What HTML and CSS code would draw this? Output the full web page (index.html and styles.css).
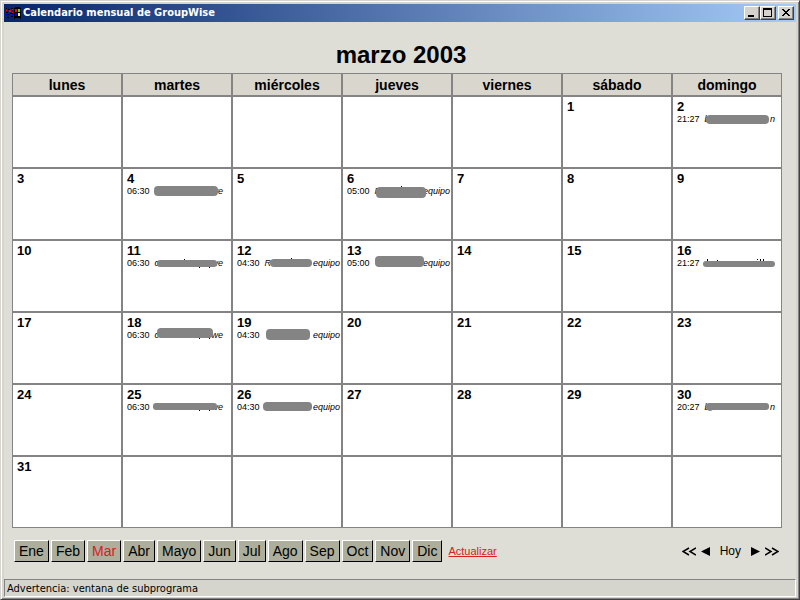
FILE: index.html
```html
<!DOCTYPE html>
<html lang="es">
<head>
<meta charset="utf-8">
<title>Calendario mensual de GroupWise</title>
<link rel="stylesheet" href="styles.css">
</head>
<body>
<div class="window">
  <header class="titlebar">
    <svg class="logo" width="16" height="16" viewBox="0 0 16 16" shape-rendering="crispEdges" aria-hidden="true">
      <path fill="#000" d="M8 3h1V2h5v1h1v11h-1v-1H9v1H8zM0 3h1v1H0zM2 4h2v1H2zM5 3h2v1H5zM0 7h2v1H0zM4 8h3v1H4zM1 9h2v1H1zM5 11h2v1H5zM1 12h2v1H1z"/>
      <path fill="#f00" d="M9 4h2v3H9zM0 5h1v1H0zM3 5h2v2H3zM6 4h1v1H6zM6 7h1v1H6z"/>
      <path fill="#0f0" d="M12 4h2v3h-2z"/>
      <path fill="#00f" d="M9 8h2v3H9zM0 9h1v2H0zM3 10h2v1H3zM6 9h1v2H6z"/>
      <path fill="#ff0" d="M12 8h2v3h-2z"/>
    </svg>
    <h1 class="caption">Calendario mensual de GroupWise</h1>
    <div class="controls">
      <button type="button" class="control" aria-label="Minimizar"><svg width="14" height="12" viewBox="0 0 14 12" shape-rendering="crispEdges"><path d="M3 8h6v2H3z"/></svg></button>
      <button type="button" class="control" aria-label="Maximizar"><svg width="14" height="12" viewBox="0 0 14 12" shape-rendering="crispEdges"><path fill-rule="evenodd" d="M2 1h9v9H2zM3 3v6h7V3z"/></svg></button>
      <button type="button" class="control close" aria-label="Cerrar"><svg width="14" height="12" viewBox="0 0 14 12" shape-rendering="crispEdges"><path d="M3 2h2v1H3zM9 2h2v1H9zM4 3h2v1H4zM8 3h2v1H8zM5 4h4v1H5zM6 5h2v1H6zM5 6h4v1H5zM4 7h2v1H4zM8 7h2v1H8zM3 8h2v1H3zM9 8h2v1H9z"/></svg></button>
    </div>
  </header>
  <main class="content">
    <h2 class="month">marzo 2003</h2>
    <table class="calendar">
      <thead>
        <tr><th scope="col">lunes</th><th scope="col">martes</th><th scope="col">miércoles</th><th scope="col">jueves</th><th scope="col">viernes</th><th scope="col">sábado</th><th scope="col">domingo</th></tr>
      </thead>
      <tbody>
        <tr>
          <td></td><td></td><td></td><td></td><td></td>
          <td><b class="day">1</b></td>
          <td><b class="day">2</b><p class="event"><time>21:27</time><i class="name person"><span>b</span><span>n</span></i></p>
            <svg class="mask" width="108" height="70" viewBox="0 0 108 70"><rect x="33" y="18" width="63" height="9" rx="4"/></svg></td>
        </tr>
        <tr>
          <td><b class="day">3</b></td>
          <td><b class="day">4</b><p class="event"><time>06:30</time><i class="name group"><span></span><span>we</span></i></p>
            <svg class="mask" width="108" height="70" viewBox="0 0 108 70"><rect x="31" y="17" width="64" height="10" rx="4"/></svg></td>
          <td><b class="day">5</b></td>
          <td><b class="day">6</b><p class="event"><time>05:00</time><i class="name"><span>R</span><span>equipo</span></i></p>
            <svg class="mask" width="108" height="70" viewBox="0 0 108 70"><path class="ink" d="M58 17h1v1h-1z"/><rect x="33" y="18" width="50" height="11" rx="4"/></svg></td>
          <td><b class="day">7</b></td>
          <td><b class="day">8</b></td>
          <td><b class="day">9</b></td>
        </tr>
        <tr>
          <td><b class="day">10</b></td>
          <td><b class="day">11</b><p class="event"><time>06:30</time><i class="name group"><span>c</span><span>we</span></i></p>
            <svg class="mask" width="108" height="70" viewBox="0 0 108 70"><path class="ink" d="M61 18h1v1h-1zM76 26h1v1h-1zM86 26h1v1h-1z"/><rect x="34" y="19" width="60" height="7" rx="3"/></svg></td>
          <td><b class="day">12</b><p class="event"><time>04:30</time><i class="name"><span>R</span><span>equipo</span></i></p>
            <svg class="mask" width="108" height="70" viewBox="0 0 108 70"><path class="ink" d="M58 17h1v1h-1z"/><rect x="37" y="18" width="42" height="8" rx="4"/></svg></td>
          <td><b class="day">13</b><p class="event"><time>05:00</time><i class="name"><span></span><span>equipo</span></i></p>
            <svg class="mask" width="108" height="70" viewBox="0 0 108 70"><rect x="32" y="15" width="49" height="11" rx="4"/></svg></td>
          <td><b class="day">14</b></td>
          <td><b class="day">15</b></td>
          <td><b class="day">16</b><p class="event"><time>21:27</time></p>
            <svg class="mask" width="108" height="70" viewBox="0 0 108 70"><path class="ink" d="M34 18h1v2h-1zM44 19h1v1h-1zM84 18h1v1h-1zM87 18h1v2h-1zM90 18h1v2h-1z"/><rect x="30" y="20" width="72" height="6" rx="3"/></svg></td>
        </tr>
        <tr>
          <td><b class="day">17</b></td>
          <td><b class="day">18</b><p class="event"><time>06:30</time><i class="name group"><span>c</span><span>we</span></i></p>
            <svg class="mask" width="108" height="70" viewBox="0 0 108 70"><path class="ink" d="M76 24h1v2h-1zM86 24h1v2h-1z"/><rect x="34" y="15" width="56" height="10" rx="4"/></svg></td>
          <td><b class="day">19</b><p class="event"><time>04:30</time><i class="name"><span></span><span>equipo</span></i></p>
            <svg class="mask" width="108" height="70" viewBox="0 0 108 70"><rect x="33" y="16" width="44" height="11" rx="4"/></svg></td>
          <td><b class="day">20</b></td>
          <td><b class="day">21</b></td>
          <td><b class="day">22</b></td>
          <td><b class="day">23</b></td>
        </tr>
        <tr>
          <td><b class="day">24</b></td>
          <td><b class="day">25</b><p class="event"><time>06:30</time><i class="name group"><span></span><span>we</span></i></p>
            <svg class="mask" width="108" height="70" viewBox="0 0 108 70"><path class="ink" d="M76 25h1v1h-1zM86 25h1v1h-1z"/><rect x="30" y="18" width="64" height="7" rx="3"/></svg></td>
          <td><b class="day">26</b><p class="event"><time>04:30</time><i class="name"><span></span><span>equipo</span></i></p>
            <svg class="mask" width="108" height="70" viewBox="0 0 108 70"><rect x="30" y="17" width="49" height="9" rx="4"/></svg></td>
          <td><b class="day">27</b></td>
          <td><b class="day">28</b></td>
          <td><b class="day">29</b></td>
          <td><b class="day">30</b><p class="event"><time>20:27</time><i class="name person"><span>b</span><span>n</span></i></p>
            <svg class="mask" width="108" height="70" viewBox="0 0 108 70"><rect x="33" y="18" width="63" height="7" rx="3"/><circle cx="37" cy="23" r="3"/></svg></td>
        </tr>
        <tr>
          <td><b class="day">31</b></td><td></td><td></td><td></td><td></td><td></td><td></td>
        </tr>
      </tbody>
    </table>
    <nav class="toolbar">
      <div class="months">
        <button type="button">Ene</button><button type="button">Feb</button><button type="button" class="current">Mar</button><button type="button">Abr</button><button type="button">Mayo</button><button type="button">Jun</button><button type="button">Jul</button><button type="button">Ago</button><button type="button">Sep</button><button type="button">Oct</button><button type="button">Nov</button><button type="button">Dic</button>
      </div>
      <a class="refresh" href="#">Actualizar</a>
      <div class="pager">
        <a href="#" aria-label="Año anterior"><svg width="14" height="9" viewBox="0 0 14 9"><path class="chevron" d="M7 1L1 4.500L7 8M14 1L8 4.500L14 8"/></svg></a>
        <a href="#" aria-label="Mes anterior"><svg width="9" height="9" viewBox="0 0 9 9"><path d="M9 0v9L0 4.500z"/></svg></a>
        <a class="today" href="#">Hoy</a>
        <a href="#" aria-label="Mes siguiente"><svg width="9" height="9" viewBox="0 0 9 9"><path d="M0 0v9L9 4.500z"/></svg></a>
        <a href="#" aria-label="Año siguiente"><svg width="14" height="9" viewBox="0 0 14 9"><path class="chevron" d="M0 1L6 4.500L0 8M7 1L13 4.500L7 8"/></svg></a>
      </div>
    </nav>
  </main>
  <footer class="status">Advertencia: ventana de subprograma</footer>
</div>
</body>
</html>
```

FILE: styles.css
```css
* { box-sizing: border-box; }

body {
  margin: 0;
  font-family: "Liberation Sans", Arial, sans-serif;
  color: #000;
}

.window {
  display: flex;
  flex-direction: column;
  min-height: 100vh;
  padding: 2px;
  background: #d6d5cd;
  border: 1px solid #d6d3ce;
  border-right-color: #424142;
  border-bottom-color: #424142;
  box-shadow: inset 1px 1px #fff, inset -1px -1px #848284;
}

.titlebar {
  display: flex;
  align-items: center;
  height: 18px;
  margin: 1px 1px 0;
  padding: 0 2px;
  background: linear-gradient(to right, #08246b, #a5cbf7);
}

.logo { flex: none; margin-right: 1px; }

.caption {
  flex: 1;
  margin: 0;
  font: bold 11px/18px "DejaVu Sans Condensed", "DejaVu Sans", sans-serif;
  color: #fff;
}

.controls { display: flex; }

.control {
  display: flex;
  width: 16px;
  height: 14px;
  padding: 0;
  background: #d6d3ce;
  border: 1px solid #fff;
  border-right-color: #424142;
  border-bottom-color: #424142;
  box-shadow: inset -1px -1px #848284;
}

.control.close { margin-left: 2px; }

.content {
  flex: 1;
  margin: 0 1px;
  padding: 20px 14px 16px 8px;
  background: #deded6;
}

.month {
  margin: 0 -8px 5px 0;
  font-size: 24px;
  line-height: 26px;
  text-align: center;
}

.calendar {
  width: 100%;
  table-layout: fixed;
  border-collapse: separate;
  border-spacing: 0;
}

.calendar th,
.calendar td {
  padding: 0;
  border: 1px solid #848484;
}

.calendar th {
  height: 23px;
  background: #d9d6ce;
  font-size: 14px;
  line-height: 20px;
}

.calendar td {
  position: relative;
  height: 72px;
  padding: 3px 1px 0 4px;
  background: #fff;
  vertical-align: top;
}

.day {
  display: block;
  font-size: 13px;
  line-height: 14px;
}

.event {
  display: flex;
  gap: 5px;
  margin: 0;
  font-size: 9px;
  line-height: 10px;
}

.name {
  display: flex;
  flex: 1;
  justify-content: space-between;
}

.group { margin-right: 7px; }
.person { margin-right: 5px; }

.mask {
  position: absolute;
  top: 0;
  left: 0;
  fill: #848484;
}

.mask .ink { fill: #000; }

.toolbar {
  display: flex;
  align-items: center;
  margin-top: 12px;
  padding: 0 3px 0 2px;
}

.months { display: flex; gap: 2px; }

.months button {
  height: 22px;
  padding: 0 4px;
  background: #adae9c;
  border: 1px solid #fff;
  border-right-color: #000;
  border-bottom-color: #000;
  font: 14px/20px "Liberation Sans", Arial, sans-serif;
  color: #000;
}

.months .current { color: #d62021; }

.refresh {
  margin-left: 6px;
  font-size: 11px;
  color: #d62021;
}

.pager {
  display: flex;
  align-items: center;
  gap: 5px;
  margin-left: auto;
}

.pager a {
  display: flex;
  color: #000;
  text-decoration: none;
}

.pager .today {
  margin: 0 5px;
  font-size: 12px;
}

.chevron {
  fill: none;
  stroke: #000;
  stroke-width: 1.5;
}

.status {
  height: 18px;
  margin: 0 1px;
  padding-left: 2px;
  border: 1px solid #848484;
  border-right-color: #fff;
  border-bottom-color: #fff;
  font: 11px/17px "DejaVu Sans Condensed", "DejaVu Sans", sans-serif;
}
```
